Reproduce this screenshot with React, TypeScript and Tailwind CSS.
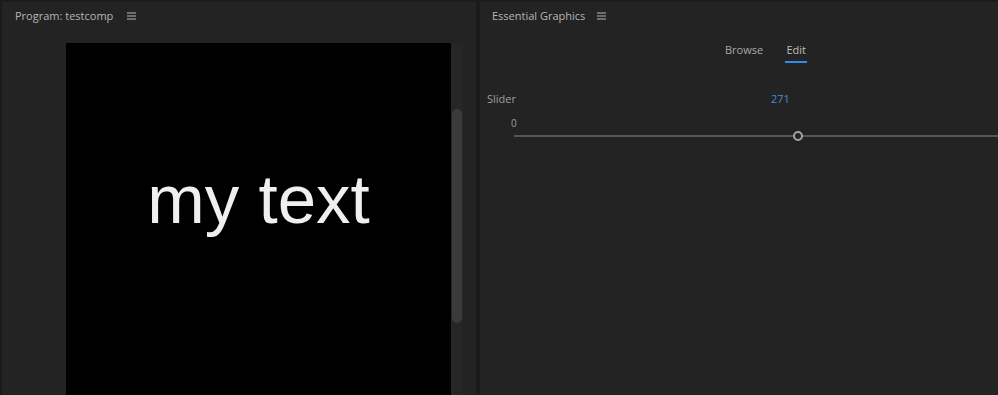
import React from "react";

const Hamburger = () => (
  <svg width="9" height="8" viewBox="0 0 9 8" className="text-[#b8b8b8]">
    <rect x="0" y="0.5" width="9" height="1" fill="currentColor" />
    <rect x="0" y="3.5" width="9" height="1" fill="currentColor" />
    <rect x="0" y="6.5" width="9" height="1" fill="currentColor" />
  </svg>
);

export default function App() {
  const font = { fontFamily: '"Open Sans", "Noto Sans", sans-serif' };
  return (
    <div className="w-[998px] h-[395px] overflow-hidden bg-[#1b1b1b] flex pt-[2px] pl-[2px]" style={font}>
      {/* Program monitor */}
      <div className="w-[474px] h-full bg-[#232323] flex flex-col">
        <div className="h-[41px] flex items-start pt-[6px] pl-[13px] gap-[14px] text-[11px] text-[#b5b5b5]">
          <span>Program: testcomp</span>
          <span className="mt-[4px]"><Hamburger /></span>
        </div>
        <div className="flex flex-1 pl-[64px]">
          <div className="w-[385px] h-full bg-black flex justify-center">
            <span
              className="mt-[122px] text-[69px] leading-none text-[#efefef]"
              style={{ fontFamily: '"Liberation Sans", Arial, sans-serif' }}
            >
              my text
            </span>
          </div>
          <div className="w-[12px] h-full bg-[#262626] pt-[66px] px-[1px]">
            <div className="h-[214px] rounded-full bg-[#3b3b3b]" />
          </div>
        </div>
      </div>

      {/* divider */}
      <div className="w-[4px] h-full" />

      {/* Essential Graphics */}
      <div className="flex-1 h-full bg-[#232323] flex flex-col">
        <div className="h-[39px] flex items-start pt-[6px] pl-[12px] gap-[12px] text-[11px] text-[#b5b5b5]">
          <span>Essential Graphics</span>
          <span className="mt-[4px]"><Hamburger /></span>
        </div>
        <div className="flex pl-[245px] gap-[22px] text-[11px]">
          <span className="text-[#a9a9a9] pt-[1px]">Browse</span>
          <div className="flex flex-col items-center">
            <span className="text-[#bdbdbd] pt-[1px]">Edit</span>
            <div className="w-[22px] h-[2px] bg-[#2d8ceb] mt-[2px]" />
          </div>
        </div>
        <div className="mt-[28px] flex items-center text-[11px] pl-[7px]">
          <span className="w-[284px] text-[#9d9d9d]">Slider</span>
          <span className="text-[#3d8fe0]">271</span>
        </div>
        <div className="mt-[11px] pl-[31px] text-[10px] text-[#9d9d9d] leading-none">0</div>
        <div className="relative mt-[3px] ml-[34px] h-[10px]">
          <div className="absolute left-0 right-0 top-[4px] h-[2px] bg-[#555555]" />
          <div className="absolute left-[279px] top-0 w-[10px] h-[10px] rounded-full border-2 border-[#a3a3a3] bg-[#232323]" />
        </div>
      </div>
    </div>
  );
}
